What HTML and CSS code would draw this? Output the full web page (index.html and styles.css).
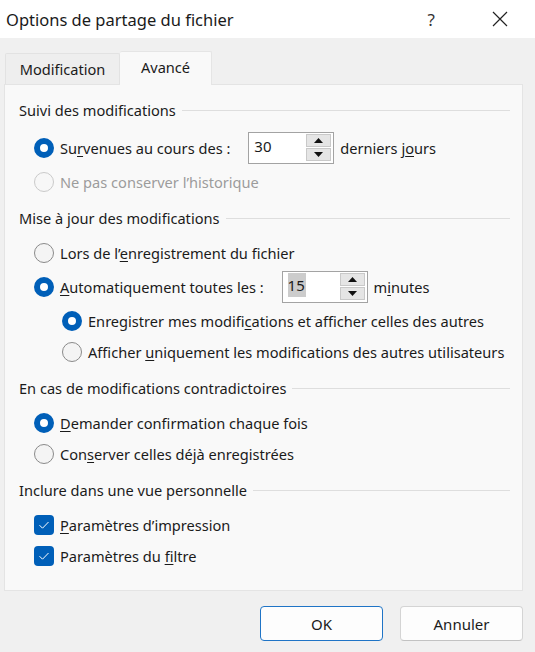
FILE: index.html
```html
<!DOCTYPE html>
<html lang="fr">
<head>
<meta charset="utf-8">
<title>Options de partage du fichier</title>
<link rel="stylesheet" href="styles.css">
</head>
<body>
<div class="window">
  <header class="titlebar">
    <div class="title">Options de partage du fichier</div>
    <div class="tb-actions">
      <span class="help">?</span>
      <svg class="close" width="16" height="16" viewBox="0 0 16 16"><path d="M1 1L15 15M15 1L1 15"/></svg>
    </div>
  </header>
  <main class="content">
    <div class="tabs">
      <div class="tab">Modification</div>
      <div class="tab active">Avancé</div>
    </div>
    <div class="panel">
      <section class="group">
        <div class="heading"><span>Suivi des modifications</span><span class="heading-line"></span></div>
        <div class="options">
          <div class="row tall">
            <span class="radio on"></span>
            <span class="label">Su<u>r</u>venues au cours des :</span>
            <span class="spin">
              <span class="spin-value">30</span>
              <span class="spin-buttons">
                <span class="spin-btn"><svg width="9" height="5" viewBox="0 0 9 5"><path d="M0 5L4.5 0L9 5Z"/></svg></span>
                <span class="spin-btn"><svg width="9" height="5" viewBox="0 0 9 5"><path d="M0 0L9 0L4.5 5Z"/></svg></span>
              </span>
            </span>
            <span class="label">derniers j<u>o</u>urs</span>
          </div>
          <div class="row disabled">
            <span class="radio"></span>
            <span class="label">Ne pas conserver l’historique</span>
          </div>
        </div>
      </section>
      <section class="group">
        <div class="heading"><span>Mise à jour des modifications</span><span class="heading-line"></span></div>
        <div class="options">
          <div class="row">
            <span class="radio"></span>
            <span class="label">Lors de l’<u>e</u>nregistrement du fichier</span>
          </div>
          <div class="row tall">
            <span class="radio on"></span>
            <span class="label"><u>A</u>utomatiquement toutes les :</span>
            <span class="spin">
              <span class="spin-value"><span class="sel">15</span></span>
              <span class="spin-buttons">
                <span class="spin-btn"><svg width="9" height="5" viewBox="0 0 9 5"><path d="M0 5L4.5 0L9 5Z"/></svg></span>
                <span class="spin-btn"><svg width="9" height="5" viewBox="0 0 9 5"><path d="M0 0L9 0L4.5 5Z"/></svg></span>
              </span>
            </span>
            <span class="label">m<u>i</u>nutes</span>
          </div>
          <div class="row sub">
            <span class="radio on"></span>
            <span class="label">Enregistrer mes modifi<u>c</u>ations et afficher celles des autres</span>
          </div>
          <div class="row sub">
            <span class="radio"></span>
            <span class="label">Afficher <u>u</u>niquement les modifications des autres utilisateurs</span>
          </div>
        </div>
      </section>
      <section class="group">
        <div class="heading"><span>En cas de modifications contradictoires</span><span class="heading-line"></span></div>
        <div class="options">
          <div class="row">
            <span class="radio on"></span>
            <span class="label"><u>D</u>emander confirmation chaque fois</span>
          </div>
          <div class="row">
            <span class="radio"></span>
            <span class="label">Con<u>s</u>erver celles déjà enregistrées</span>
          </div>
        </div>
      </section>
      <section class="group">
        <div class="heading"><span>Inclure dans une vue personnelle</span><span class="heading-line"></span></div>
        <div class="options">
          <div class="row">
            <span class="check"><svg width="12" height="10" viewBox="0 0 12 10"><path d="M1.5 5.2L4.5 8.2L10.5 2"/></svg></span>
            <span class="label"><u>P</u>aramètres d’impression</span>
          </div>
          <div class="row">
            <span class="check"><svg width="12" height="10" viewBox="0 0 12 10"><path d="M1.5 5.2L4.5 8.2L10.5 2"/></svg></span>
            <span class="label">Paramètres du <u>f</u>iltre</span>
          </div>
        </div>
      </section>
    </div>
    <footer class="footer">
      <button class="btn default">OK</button>
      <button class="btn">Annuler</button>
    </footer>
  </main>
</div>
</body>
</html>
```
FILE: styles.css
```css
html, body {
  margin: 0;
  padding: 0;
}
body {
  width: 535px;
  height: 652px;
  overflow: hidden;
  background: #f0f0f0;
  font-family: "Noto Sans", "Open Sans", sans-serif;
  font-size: 14.6px;
  color: #1b1b1b;
}
.window {
  width: 535px;
  height: 652px;
}
.titlebar {
  height: 38px;
  background: #ffffff;
  display: flex;
  align-items: center;
  justify-content: space-between;
  padding-left: 6px;
}
.title {
  font-size: 16.5px;
  color: #1a1a1a;
}
.tb-actions {
  display: flex;
  align-items: center;
  padding-right: 27px;
}
.help {
  font-size: 17px;
  color: #333;
  margin-right: 57px;
}
.close {
  stroke: #222;
  stroke-width: 1.2;
  fill: none;
}
.content {
  padding-top: 13px;
}
.tabs {
  display: flex;
  align-items: flex-end;
  height: 33px;
  padding-left: 5px;
}
.tab {
  box-sizing: border-box;
  height: 31px;
  width: 115px;
  border: 1px solid #e2e2e2;
  border-bottom: none;
  border-radius: 2px 2px 0 0;
  background: #eeeeee;
  display: flex;
  align-items: center;
  justify-content: center;
  padding-bottom: 1px;
}
.tab.active {
  height: 34px;
  width: 92px;
  margin-bottom: -1px;
  background: #f9f9f9;
  border-color: #e5e5e5;
  border-left: none;
  position: relative;
  z-index: 1;
  padding-bottom: 3px;
}
.panel {
  margin: 0 12px 0 4px;
  background: #f9f9f9;
  border: 1px solid #e4e4e4;
  padding: 15px 0 19px 14px;
}
.group + .group {
  margin-top: 11px;
}
.heading {
  height: 20px;
  display: flex;
  align-items: center;
}
.heading-line {
  flex: 1;
  height: 1px;
  background: #dedede;
  margin: 0 12px 0 6px;
}
.options {
  margin-top: 9px;
  margin-left: 15px;
}
.row {
  height: 31px;
  display: flex;
  align-items: center;
}
.row.tall {
  height: 37px;
}
.row.sub {
  padding-left: 28px;
}
.row.disabled .label {
  color: #9c9c9c;
}
.label u {
  text-underline-offset: 2px;
  text-decoration-thickness: 1px;
}
.radio {
  box-sizing: border-box;
  width: 20px;
  height: 20px;
  border-radius: 50%;
  border: 1px solid #8a8a8a;
  background: #f4f4f4;
  margin-right: 6px;
  flex: none;
}
.row.disabled .radio {
  border-color: #cacaca;
  background: #f7f7f7;
}
.radio.on {
  border: 6px solid #005fb8;
  background: #ffffff;
}
.check {
  box-sizing: border-box;
  width: 20px;
  height: 20px;
  border-radius: 4px;
  background: #005fb8;
  margin-right: 6px;
  display: flex;
  align-items: center;
  justify-content: center;
  flex: none;
}
.check svg {
  fill: none;
  stroke: #ffffff;
  stroke-width: 1;
}
.spin {
  box-sizing: border-box;
  width: 86px;
  height: 32px;
  margin: 0 6px 0 18px;
  background: #ffffff;
  border: 1px solid #a3a3a3;
  display: flex;
  align-items: center;
  flex: none;
}
.spin-value {
  flex: 1;
  padding-left: 5px;
  font-size: 15px;
  padding-bottom: 4px;
}
.sel {
  background: #cccccc;
  padding: 2px 1px 2px 0;
}
.spin-buttons {
  display: flex;
  flex-direction: column;
  gap: 1px;
  margin-right: 2px;
}
.spin-btn {
  box-sizing: border-box;
  width: 25px;
  height: 13px;
  background: #e5e5e5;
  border: 1px solid #c9c9c9;
  display: flex;
  align-items: center;
  justify-content: center;
}
.spin-btn svg {
  fill: #111;
}
.footer {
  display: flex;
  justify-content: flex-end;
  gap: 17px;
  margin-top: 15px;
  padding-right: 12px;
}
.btn {
  box-sizing: border-box;
  width: 123px;
  height: 35px;
  border-radius: 4px;
  background: #fdfdfd;
  border: 1px solid #d4d4d4;
  border-bottom-color: #c2c2c2;
  font-family: "Noto Sans", "Open Sans", sans-serif;
  font-size: 15px;
  color: #1b1b1b;
  padding: 0;
}
.btn.default {
  border: 1px solid #1f74c6;
}
```
